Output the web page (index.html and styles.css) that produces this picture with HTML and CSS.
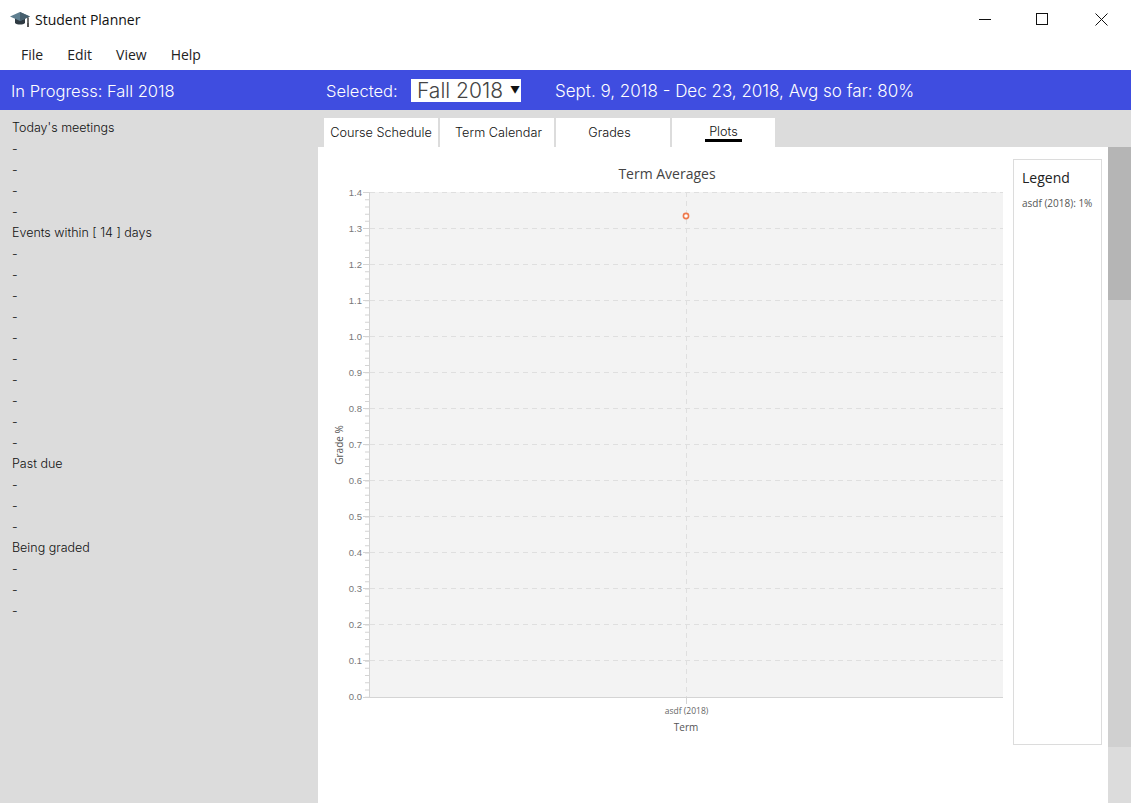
FILE: index.html
```html
<!DOCTYPE html>
<html lang="en">
<head>
<meta charset="utf-8">
<title>Student Planner</title>
<link rel="stylesheet" href="styles.css">
</head>
<body>
<div class="app">
  <header class="titlebar">
    <svg class="app-icon" width="20" height="18" viewBox="0 0 20 18">
      <path d="M5 8v5c2 2 8 2 10 0V8z" fill="#2f3a42"/>
      <path d="M0 6.500 10 2l10 4.500L10 11z" fill="#5f7f90"/>
      <path d="M10 2l10 4.500L10 11z" fill="#47606e"/>
      <path d="M18 7.500v6.500" stroke="#333" stroke-width="1.400"/>
      <rect x="17" y="13" width="2" height="4" fill="#555"/>
    </svg>
    <span class="app-title">Student Planner</span>
    <div class="window-controls">
      <svg class="win-btn" width="12" height="12" viewBox="0 0 12 12"><path d="M0 6.500h12" stroke="#111"/></svg>
      <svg class="win-btn" width="12" height="12" viewBox="0 0 12 12"><rect x=".5" y=".5" width="11" height="11" fill="none" stroke="#111"/></svg>
      <svg class="win-btn" width="13" height="13" viewBox="0 0 13 13"><path d="M.5.500l12 12M12.500.500l-12 12" stroke="#111" fill="none"/></svg>
    </div>
  </header>
  <nav class="menubar">
    <span class="menu-item">File</span>
    <span class="menu-item">Edit</span>
    <span class="menu-item">View</span>
    <span class="menu-item">Help</span>
  </nav>
  <div class="statusbar">
    <span class="status-progress">In Progress: Fall 2018</span>
    <span class="status-selected">Selected:</span>
    <div class="term-select"><span class="term-name">Fall 2018</span><span class="term-caret">▼</span></div>
    <span class="status-dates">Sept. 9, 2018 - Dec 23, 2018, Avg so far: 80%</span>
  </div>
  <div class="body">
    <aside class="sidebar">
      <div>Today's meetings</div>
      <div>-</div><div>-</div><div>-</div><div>-</div>
      <div>Events within [ 14 ] days</div>
      <div>-</div><div>-</div><div>-</div><div>-</div><div>-</div>
      <div>-</div><div>-</div><div>-</div><div>-</div><div>-</div>
      <div>Past due</div>
      <div>-</div><div>-</div><div>-</div>
      <div>Being graded</div>
      <div>-</div><div>-</div><div>-</div>
    </aside>
    <div class="workspace">
      <div class="tabs">
        <div class="tab">Course Schedule</div>
        <div class="tab tab-term">Term Calendar</div>
        <div class="tab tab-grades">Grades</div>
        <div class="tab tab-plots"><span class="tab-active">Plots</span></div>
      </div>
      <div class="content">
        <main class="panel">
          <svg class="chart" width="690" height="598" viewBox="318 147 690 598">
            <rect x="370" y="192" width="633" height="505" fill="#f3f3f3"/>
            <path class="grid" d="M370 192.500H1003M370 228.500H1003M370 264.500H1003M370 300.500H1003M370 336.500H1003M370 372.500H1003M370 408.500H1003M370 444.500H1003M370 480.500H1003M370 516.500H1003M370 552.500H1003M370 588.500H1003M370 624.500H1003M370 660.500H1003M686.500 192V697"/>
            <path class="axis" d="M369.500 192V697M363 697.500H1003M686.500 697V704"/>
            <path class="axis" d="M363 192.500H370M363 228.500H370M363 264.500H370M363 300.500H370M363 336.500H370M363 372.500H370M363 408.500H370M363 444.500H370M363 480.500H370M363 516.500H370M363 552.500H370M363 588.500H370M363 624.500H370M363 660.500H370"/>
            <line class="minor" x1="367" y1="192" x2="367" y2="697"/>
            <g class="y-labels">
              <text x="362" y="196">1.4</text><text x="362" y="232">1.3</text><text x="362" y="268">1.2</text>
              <text x="362" y="304">1.1</text><text x="362" y="340">1.0</text><text x="362" y="376">0.9</text>
              <text x="362" y="412">0.8</text><text x="362" y="448">0.7</text><text x="362" y="484">0.6</text>
              <text x="362" y="520">0.5</text><text x="362" y="556">0.4</text><text x="362" y="592">0.3</text>
              <text x="362" y="628">0.2</text><text x="362" y="664">0.1</text><text x="362" y="700">0.0</text>
            </g>
            <circle cx="686" cy="216" r="2.600" fill="#fff" stroke="#ee7a4d" stroke-width="1.600"/>
            <text class="chart-title" x="667" y="179">Term Averages</text>
            <text class="x-label" x="686.500" y="714">asdf (2018)</text>
            <text class="axis-title" x="686" y="731">Term</text>
            <text class="axis-title" transform="translate(343 445) rotate(-90)">Grade %</text>
          </svg>
          <section class="legend">
            <h2 class="legend-title">Legend</h2>
            <p class="legend-item">asdf (2018): 1%</p>
          </section>
        </main>
        <div class="scrollbar"><div class="scroll-thumb"></div><div class="scroll-track"></div></div>
      </div>
    </div>
  </div>
</div>
</body>
</html>
```
FILE: styles.css
```css
* { box-sizing: border-box; }
html, body { margin: 0; height: 100%; overflow: hidden; background: #fff; }
.app { width: 1131px; height: 803px; display: flex; flex-direction: column; font-family: "Inter", "Liberation Sans", sans-serif; font-weight: 300; color: #111; }

.titlebar { height: 40px; flex: none; display: flex; align-items: center; padding: 0 0 2px 10px; font-family: "Open Sans", sans-serif; font-weight: 400; font-size: 14px; }
.app-icon { margin-right: 5px; }
.app-title { color: #111; }
.window-controls { margin-left: auto; display: flex; align-items: center; }
.win-btn { display: block; }
.win-btn:nth-child(1) { margin-right: 45px; }
.win-btn:nth-child(2) { margin-right: 47px; }
.win-btn:nth-child(3) { margin-right: 23px; }

.menubar { height: 30px; flex: none; display: flex; align-items: center; gap: 24px; padding: 0 0 1px 21px; font-family: "Open Sans", sans-serif; font-weight: 400; font-size: 14px; color: #222; }

.statusbar { height: 40px; flex: none; display: flex; align-items: center; background: #3f4de0; color: #fff; font-size: 16.500px; }
.status-progress { margin: 1px 0 0 11px; width: 315px; white-space: nowrap; }
.status-selected { margin-top: 1px; width: 85px; white-space: nowrap; }
.term-select { width: 110px; height: 23px; background: #fff; color: #444; font-size: 21px; display: flex; align-items: center; padding-left: 6px; white-space: nowrap; }
.term-caret { color: #111; font-size: 10px; font-weight: 400; margin-left: 7px; }
.status-dates { margin: 1px 0 0 34px; font-size: 17px; white-space: nowrap; }

.body { flex: 1; display: flex; min-height: 0; }
.sidebar { width: 318px; flex: none; background: #dcdcdc; padding: 7px 0 0 12px; font-size: 12.500px; line-height: 21px; color: #111; }
.workspace { flex: 1; display: flex; flex-direction: column; background: #dcdcdc; min-width: 0; }

.tabs { height: 37px; flex: none; display: flex; gap: 2px; padding: 8px 0 0 6px; }
.tab { width: 114px; height: 29px; background: #fff; font-size: 12.700px; display: flex; justify-content: center; padding-top: 7px; color: #111; white-space: nowrap; }
.tab-term { padding-left: 3px; }
.tab-grades { padding-right: 7px; }
.tab-plots { width: 103px; }
.tab-active { display: block; height: 14px; width: 37px; line-height: 14px; text-align: center; border-bottom: 3px solid #000; box-sizing: content-box; }

.content { flex: 1; display: flex; min-height: 0; }
.panel { flex: 1; background: #fff; display: flex; align-items: flex-start; }
.chart { display: block; flex: none; font-family: "Open Sans", sans-serif; font-weight: 400; }
.grid { fill: none; stroke: #dfdfdf; stroke-dasharray: 5 4; }
.axis { fill: none; stroke: #d4d4d4; }
.minor { stroke: #d4d4d4; stroke-width: 4; stroke-dasharray: 1 6.210; }
.y-labels text { font-family: "Liberation Sans", sans-serif; font-size: 9.500px; fill: #777; text-anchor: end; }
.chart-title { font-size: 14px; fill: #444; text-anchor: middle; }
.x-label { font-size: 8.500px; fill: #666; text-anchor: middle; }
.axis-title { font-size: 10px; fill: #555; text-anchor: middle; }

.legend { width: 89px; height: 586px; margin: 12px 0 0 5px; flex: none; border: 1px solid #dcdcdc; padding: 9px 8px; font-family: "Open Sans", sans-serif; font-weight: 400; }
.legend-title { margin: 0; font-size: 14px; line-height: 18px; font-weight: 400; color: #222; }
.legend-item { margin: 9px 0 0; font-size: 10px; line-height: 14px; color: #555; white-space: nowrap; }

.scrollbar { width: 23px; flex: none; display: flex; flex-direction: column; background: #dcdcdc; }
.scroll-thumb { height: 153px; background: #b5b5b5; }
.scroll-track { height: 447px; background: #d0d0d0; }
```
